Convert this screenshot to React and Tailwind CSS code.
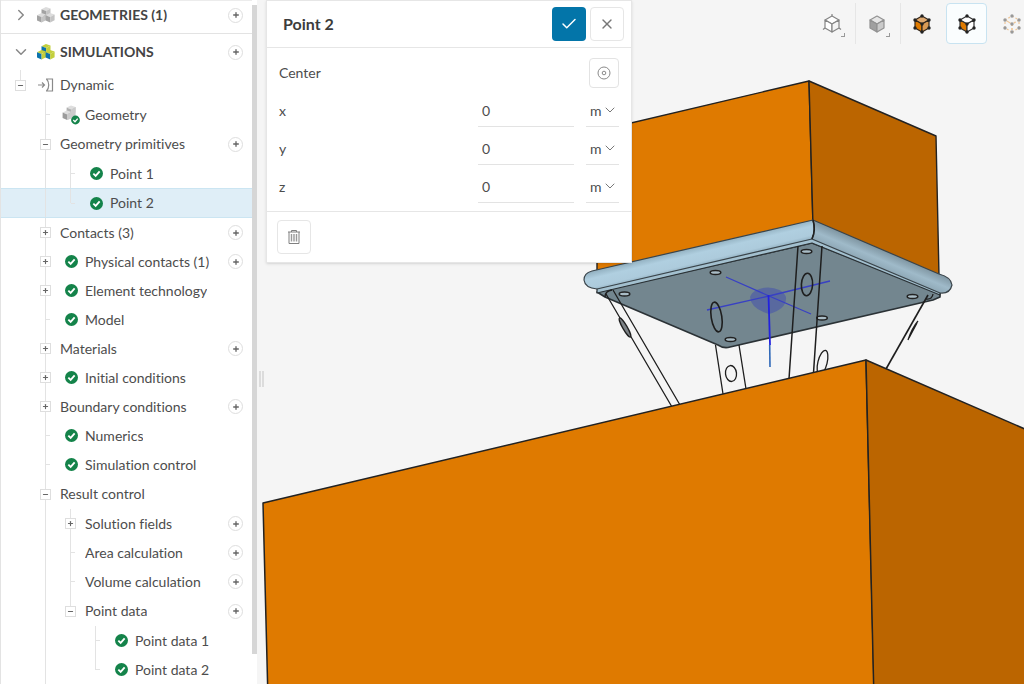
import { useState } from "react";
import { Check, ChevronDown, ChevronRight, Minus, Plus, X } from "lucide-react";

const sections = [
  { name: "GEOMETRIES (1)", open: false, tint: ["#dcdcdc", "#a3a3a3", "#c4c4c4"] },
  { name: "SIMULATIONS", open: true, tint: ["#c3cf3c", "#0b73ad", "#c3cf3c"] },
];

const tree = [
  {
    id: "dynamic", label: "Dynamic", icon: "dynamic",
    children: [
      { id: "geometry", label: "Geometry", icon: "geometry" },
      {
        id: "primitives", label: "Geometry primitives", add: true,
        children: [
          { id: "point1", label: "Point 1", icon: "ok" },
          { id: "point2", label: "Point 2", icon: "ok" },
        ],
      },
      { id: "contacts", label: "Contacts (3)", add: true, children: [] },
      { id: "physical", label: "Physical contacts (1)", icon: "ok", add: true, children: [] },
      { id: "element", label: "Element technology", icon: "ok", children: [] },
      { id: "model", label: "Model", icon: "ok" },
      { id: "materials", label: "Materials", add: true, children: [] },
      { id: "initial", label: "Initial conditions", icon: "ok", children: [] },
      { id: "boundary", label: "Boundary conditions", add: true, children: [] },
      { id: "numerics", label: "Numerics", icon: "ok" },
      { id: "simcontrol", label: "Simulation control", icon: "ok" },
      {
        id: "result", label: "Result control", more: true,
        children: [
          { id: "fields", label: "Solution fields", add: true, children: [] },
          { id: "area", label: "Area calculation", add: true },
          { id: "volume", label: "Volume calculation", add: true },
          {
            id: "pointdata", label: "Point data", add: true,
            children: [
              { id: "pd1", label: "Point data 1", icon: "ok" },
              { id: "pd2", label: "Point data 2", icon: "ok" },
            ],
          },
        ],
      },
    ],
  },
];

function AddButton({ label }) {
  return (
    <button aria-label={`Add to ${label}`} className="mr-[9px] flex size-[15px] shrink-0 items-center justify-center rounded-full border border-[#dedede] bg-white text-[#666]">
      <Plus size={8} strokeWidth={4} />
    </button>
  );
}

function OkIcon({ size = 13 }) {
  return (
    <svg width={size} height={size} viewBox="0 0 14 14">
      <circle cx="7" cy="7" r="7" fill="#14834a" />
      <path d="M3.6 7.2 6.1 9.6 10.4 4.8" fill="none" stroke="#fff" strokeWidth="2" />
    </svg>
  );
}

function Cube({ x, y, tint }) {
  return (
    <g transform={`translate(${x} ${y})`}>
      <path d="M0 2.2 4.4 0 9 1.6 4.6 4z" fill={tint[0]} />
      <path d="M0 2.2 4.6 4V9.6L0 7.6z" fill={tint[1]} />
      <path d="M4.6 4 9 1.6V7.2L4.6 9.6z" fill={tint[2]} />
    </g>
  );
}

function CubesIcon({ tint }) {
  return (
    <svg width="18" height="16" viewBox="0 0 18 16">
      <Cube x={4.5} y={0} tint={tint} />
      <Cube x={0} y={6} tint={tint} />
      <Cube x={8.6} y={6} tint={tint} />
    </svg>
  );
}

function NodeIcon({ kind }) {
  if (kind === "ok") return <OkIcon />;
  if (kind === "dynamic") {
    return (
      <svg width="16" height="14" viewBox="0 0 16 14" fill="none" stroke="#8a8a8a" strokeWidth="1.2">
        <path d="M0 7H6M4 4.5 6.5 7 4 9.5" />
        <path d="M8 1H14.5V13H8M8.5 1C11.5 4 11.5 10 8.5 13" />
      </svg>
    );
  }
  // two stacked blocks with the status badge over the corner
  return (
    <svg width="22" height="20" viewBox="0 0 22 20">
      <Cube x={6.6} y={0.4} tint={["#dedede", "#b2b2b2", "#cbcbcb"]} />
      <Cube x={2.6} y={5.4} tint={["#dedede", "#9c9c9c", "#c2c2c2"]} />
      <path d="M11.2 4.4 15.6 2V12L7.2 15V9.4L11.2 7.6z" fill="#cbcbcb" />
      <circle cx="15.5" cy="15" r="4.4" fill="#14834a" />
      <path d="M13.3 15 15 16.7 17.7 13.6" fill="none" stroke="#fff" strokeWidth="1.3" />
    </svg>
  );
}

// one 25px column of the tree: guide line, tick or toggle box
function Guide({ line, children }) {
  return (
    <span className="grid w-[25px] shrink-0 self-stretch">
      {line === "full" && <span className="w-px justify-self-center bg-[#e3e3e3] [grid-area:1/1]" />}
      {line === "half" && <span className="h-1/2 w-px justify-self-center bg-[#e3e3e3] [grid-area:1/1]" />}
      {children}
    </span>
  );
}

function TreeNode({ node, guides, last, selected, onSelect, closed, onToggle }) {
  const depth = guides.length;
  const isOpen = node.children?.length > 0 && !closed.includes(node.id);
  const active = selected === node.id;
  const own = depth === 0 || (last && !node.more) ? "half" : "full";

  return (
    <li>
      <div className={`flex items-center pl-[7px] ${active ? "h-[30px] border-y border-[#cbe5f2] bg-[#dfeef7]" : isOpen ? "h-[30px]" : "h-[29px]"}`}>
        {guides.map((g, i) => <Guide key={i} line={g} />)}
        <Guide line={own}>
          {node.children ? (
            <button onClick={() => onToggle(node.id)} aria-label={`${isOpen ? "Collapse" : "Expand"} ${node.label}`}
              className="flex size-[11px] items-center justify-center place-self-center border border-[#dedede] bg-white text-[#666] [grid-area:1/1]">
              {isOpen ? <Minus size={7} strokeWidth={4} /> : <Plus size={7} strokeWidth={4} />}
            </button>
          ) : (
            <span className="ml-[13px] h-px w-1 self-center bg-[#e3e3e3] [grid-area:1/1]" />
          )}
        </Guide>
        <button onClick={() => onSelect(node.id)} className="flex min-w-0 flex-1 items-center pl-0.5 text-left">
          {node.icon && <span className="mr-[3px] flex w-[22px] shrink-0 justify-center"><NodeIcon kind={node.icon} /></span>}
          <span className="truncate">{node.label}</span>
        </button>
        {node.add && <AddButton label={node.label} />}
      </div>
      {isOpen && (
        <ul>
          {node.children.map((child, i) => (
            <TreeNode key={child.id} node={child} last={i === node.children.length - 1}
              guides={[...guides, depth === 0 || (last && !node.more) ? "none" : "full"]}
              selected={selected} onSelect={onSelect} closed={closed} onToggle={onToggle} />
          ))}
        </ul>
      )}
    </li>
  );
}

function Sidebar() {
  const [selected, setSelected] = useState("point2");
  const [closed, setClosed] = useState([]);
  const toggle = id => setClosed(c => c.includes(id) ? c.filter(x => x !== id) : [...c, id]);

  return (
    <aside className="flex w-[257px] shrink-0 overflow-hidden border-l border-[#e3e3e3] bg-white">
      <nav className="min-w-0 flex-1 border-t border-[#ececec]">
        {sections.map(s => (
          <div key={s.name} className={`flex items-center pl-[7px] ${s.open ? "h-9" : "h-[33px] border-b border-[#e3e3e3] pb-1"}`}>
            <button aria-label={`Toggle ${s.name}`} className="flex w-[25px] justify-center text-[#888]">
              {s.open ? <ChevronDown size={18} strokeWidth={2} /> : <ChevronRight size={18} strokeWidth={2} />}
            </button>
            <span className="mr-[3px] ml-0.5 flex w-[22px] justify-center"><CubesIcon tint={s.tint} /></span>
            <h2 className="flex-1 font-bold text-[#444]">{s.name}</h2>
            <AddButton label={s.name} />
          </div>
        ))}
        <ul>
          {tree.map(n => (
            <TreeNode key={n.id} node={n} guides={[]} last selected={selected} onSelect={setSelected} closed={closed} onToggle={toggle} />
          ))}
        </ul>
      </nav>
      <div className="w-[5px] bg-white pt-[5px] pb-[30px]">
        <div className="h-full bg-[#d6d6d6]" />
      </div>
    </aside>
  );
}

function TargetIcon() {
  return (
    <svg width="14" height="14" viewBox="0 0 14 14" fill="none" stroke="#8a8a8a">
      <circle cx="7" cy="7" r="6" />
      <circle cx="7" cy="7" r="1.8" />
    </svg>
  );
}

function TrashIcon() {
  return (
    <svg width="14" height="16" viewBox="0 0 14 16" fill="none" stroke="#808080">
      <path d="M1 3H13M4.5 3V1.5H9.5V3" />
      <path d="M2 3V14.5H12V3" />
      <path d="M4.5 5V12.5M7 5V12.5M9.5 5V12.5" strokeWidth="1.4" stroke="#9a9a9a" />
    </svg>
  );
}

function PointPanel() {
  const [values, setValues] = useState({ x: "0", y: "0", z: "0" });

  return (
    <section className="absolute top-0 left-[9px] w-[366px] border border-[#e6e6e6] bg-white shadow-sm">
      <header className="flex h-[47px] items-center border-b border-[#e6e6e6] pr-[7px] pl-4">
        <h1 className="flex-1 text-base font-bold text-[#3c3c3c]">Point 2</h1>
        <button aria-label="Apply" className="flex size-[34px] items-center justify-center rounded bg-[#0375a9] text-white">
          <Check size={18} strokeWidth={2} />
        </button>
        <button aria-label="Close" className="ml-1 flex size-[34px] items-center justify-center rounded border border-[#e6e6e6] text-[#777]">
          <X size={16} strokeWidth={2} />
        </button>
      </header>

      <div className="pt-[10px] pr-3 pb-[5px] pl-3">
        <div className="flex items-center justify-between">
          <span>Center</span>
          <button aria-label="Pick center" className="flex size-[30px] items-center justify-center rounded border border-[#e3e3e3]">
            <TargetIcon />
          </button>
        </div>
        <div className="pt-1">
          {["x", "y", "z"].map(axis => (
            <div key={axis} className="flex h-[38px] items-center">
              <label htmlFor={axis} className="flex-1">{axis}</label>
              <input id={axis} value={values[axis]} onChange={e => setValues({ ...values, [axis]: e.target.value })}
                className="mr-3 h-8 w-24 border-b border-[#e3e3e3] pl-1 outline-none" />
              <div className="relative h-8 w-[33px] border-b border-[#e3e3e3]">
                <select aria-label={`${axis} unit`} className="h-full w-full appearance-none bg-transparent pl-1 outline-none">
                  <option>m</option>
                </select>
                <ChevronDown size={16} strokeWidth={1.5} className="pointer-events-none absolute top-[7px] right-px text-[#777]" />
              </div>
            </div>
          ))}
        </div>
      </div>

      <footer className="border-t border-[#e6e6e6] px-[10px] py-2">
        <button aria-label="Delete" className="flex size-[34px] items-center justify-center rounded border border-[#e6e6e6]">
          <TrashIcon />
        </button>
      </footer>
    </section>
  );
}

const corners = [[10, 2], [17, 6], [17, 14], [10, 18], [3, 14], [3, 6], [10, 10]];

function ViewCube({ top, left, right, stroke, dots, axes, dashed }) {
  return (
    <svg width="20" height="20" viewBox="0 0 20 20" stroke={stroke} strokeWidth="1.2" strokeLinejoin="round" strokeDasharray={dashed ? "2 2" : undefined}>
      <path d="M10 2 17 6 10 10 3 6z" fill={top} />
      <path d="M3 6 10 10V18L3 14z" fill={left} />
      <path d="M17 6 10 10V18L17 14z" fill={right} />
      {axes && <path d="M10 0V2M3 14 1 15.5M17 14 19 15.5" />}
      {dots && corners.map(([x, y]) => <circle key={`${x}-${y}`} cx={x} cy={y} r="1.7" fill={dots} stroke="none" />)}
    </svg>
  );
}

const tools = [
  { name: "Orientation", menu: true, cube: { top: "#fff", left: "#fff", right: "#f4f4f4", stroke: "#858585", axes: true } },
  { name: "Render mode", menu: true, sep: true, cube: { top: "#e6e6e6", left: "#a0a0a0", right: "#cacaca", stroke: "#929292" } },
  { name: "Volumes", sep: true, cube: { top: "#e0aa70", left: "#df7a00", right: "#d99a55", stroke: "#33261a", dots: "#222" } },
  { name: "Faces", active: true, cube: { top: "#fff", left: "#df7a00", right: "#fff", stroke: "#333", dots: "#222" } },
  { name: "Nodes", cube: { top: "none", left: "none", right: "none", stroke: "#eec79a", dots: "#999", dashed: true } },
];

function Toolbar() {
  return (
    <div className="absolute top-[3px] -right-2 flex">
      {tools.map(t => (
        <div key={t.name} className={`ml-[3px] border-l ${t.sep ? "border-[#e6e6e6]" : "border-transparent"}`}>
          <button aria-label={t.name} className={`relative flex h-[41px] w-[41px] items-center justify-center rounded border ${t.active ? "border-[#c8e3f1] bg-[#fafdfe]" : "border-transparent"}`}>
            <ViewCube {...t.cube} />
            {t.menu && <span className="absolute right-1.5 bottom-1.5 size-1 border-r border-b border-[#999]" />}
          </button>
        </div>
      ))}
    </div>
  );
}

function Viewport() {
  return (
    <svg className="absolute inset-0 h-full w-full" viewBox="257 0 767 684" preserveAspectRatio="xMinYMin slice" strokeLinejoin="round">
      <defs>
        <linearGradient id="tubeLeft" gradientUnits="userSpaceOnUse" x1="700" y1="245" x2="705" y2="266">
          <stop offset="0" stopColor="#8fadbd" />
          <stop offset="0.35" stopColor="#b0cfe0" />
          <stop offset="0.75" stopColor="#adcbdc" />
          <stop offset="1" stopColor="#8ba9b9" />
        </linearGradient>
        <linearGradient id="tubeRight" gradientUnits="userSpaceOnUse" x1="880" y1="248" x2="872" y2="267">
          <stop offset="0" stopColor="#7d939f" />
          <stop offset="0.5" stopColor="#9fbac9" />
          <stop offset="1" stopColor="#8aa3b1" />
        </linearGradient>
      </defs>

      {/* upper block */}
      <path d="M597 131 809 81 813 226 597 275z" fill="#df7a00" stroke="#222" strokeWidth="1.4" />
      <path d="M809 81 936 136 939 276 813 226z" fill="#bb6500" stroke="#222" strokeWidth="1.4" />

      {/* mounting plate */}
      <path d="M597 292 812 243 940 293V297L933 300 730 347Q724 349 718 345L605 297z" fill="#73868f" stroke="#2b3236" strokeWidth="1.6" />
      <path d="M597 288 812 238 940 291V295L812 243 597 293z" fill="#a3c0cf" stroke="#2b3236" strokeWidth="1.2" />

      {/* rounded rim */}
      <path d="M592 271 813 220Q816 230 812 239L597 289Q585 288 584 280 584 273 592 271z" fill="url(#tubeLeft)" stroke="#3a444a" strokeWidth="1.2" />
      <path d="M813 220 939 274Q951 277 952 285 950 294 940 293L812 239Q816 230 813 220z" fill="url(#tubeRight)" stroke="#3a444a" strokeWidth="1.2" />
      <path d="M813 220Q816 230 812 239" fill="none" stroke="#222" strokeWidth="1.6" />

      {/* bolt holes */}
      <g fill="#a9bcc6" stroke="#222" strokeWidth="1.5">
        <ellipse cx="715.5" cy="272.5" rx="5.3" ry="2" />
        <ellipse cx="624.5" cy="294" rx="5.3" ry="2" />
        <ellipse cx="730.5" cy="339.5" rx="5.3" ry="2" />
        <ellipse cx="806.5" cy="251.5" rx="5.3" ry="2" />
        <ellipse cx="912.5" cy="296.5" rx="5.3" ry="2" />
        <ellipse cx="822" cy="318" rx="5.3" ry="2" />
      </g>

      {/* origin marker */}
      <path d="M750 297A18.5 12.5 0 0 1 786 297Q787 309 769 314 751 309 750 297z" fill="#3a46b4" fillOpacity="0.45" />
      <path d="M726 277 769 296 811 314M707 310 769 296 830 281" fill="none" stroke="#3840c4" strokeWidth="1.3" />
      <path d="M768.5 295 770 345" stroke="#2222e0" strokeWidth="1.8" />
      <path d="M769.7 345 770 367" stroke="#2f68b8" strokeWidth="1.6" />

      {/* struts */}
      <g fill="none" stroke="#1e1e1e" strokeWidth="1.3">
        <path d="M606 294 672 407M613 290 680 405" />
        <path d="M605 297Q605 291 612 290" />
        <path d="M715.5 345 723 394M739 345 746 389" />
        <path d="M798 246 789 379M822 246 813.5 373" strokeWidth="1.5" />
        <path d="M928 295 886 369" strokeWidth="1.6" />
        <path d="M918 321Q912 328 908 340M917 323 909 338" />
        <path d="M926 299Q932 300 933 294" />
        <ellipse cx="716.5" cy="317" rx="5.3" ry="15" transform="rotate(-9 716.5 317)" strokeWidth="1.6" />
        <ellipse cx="807" cy="284.5" rx="5.6" ry="11.2" transform="rotate(3 807 284.5)" strokeWidth="1.6" />
        <ellipse cx="731" cy="373.5" rx="5.5" ry="8" transform="rotate(-6 731 373.5)" />
        <ellipse cx="822.5" cy="362.5" rx="4.6" ry="12.5" transform="rotate(14 822.5 362.5)" />
        <ellipse cx="625" cy="327.5" rx="2.2" ry="11" transform="rotate(-30 625 327.5)" fill="#7c8286" />
      </g>

      {/* lower block */}
      <path d="M263 503 866 360 874 684 874 700 268 700z" fill="#df7a00" stroke="#222" strokeWidth="1.5" />
      <path d="M866 360 1040 435.5V700H874z" fill="#bb6500" stroke="#222" strokeWidth="1.5" />
    </svg>
  );
}

export default function App() {
  return (
    <div className="flex h-screen overflow-hidden bg-[#f5f5f5] font-['Lato',sans-serif] text-sm text-[#4d4d4d] [font-variant-ligatures:none]">
      <Sidebar />
      <main className="relative min-w-0 flex-1 overflow-hidden">
        <Viewport />
        <div className="absolute top-[371px] left-0.5 flex h-4 w-[5px] justify-between">
          <span className="w-0.5 bg-[#dcdcdc]" />
          <span className="w-0.5 bg-[#dcdcdc]" />
        </div>
        <PointPanel />
        <Toolbar />
      </main>
    </div>
  );
}
